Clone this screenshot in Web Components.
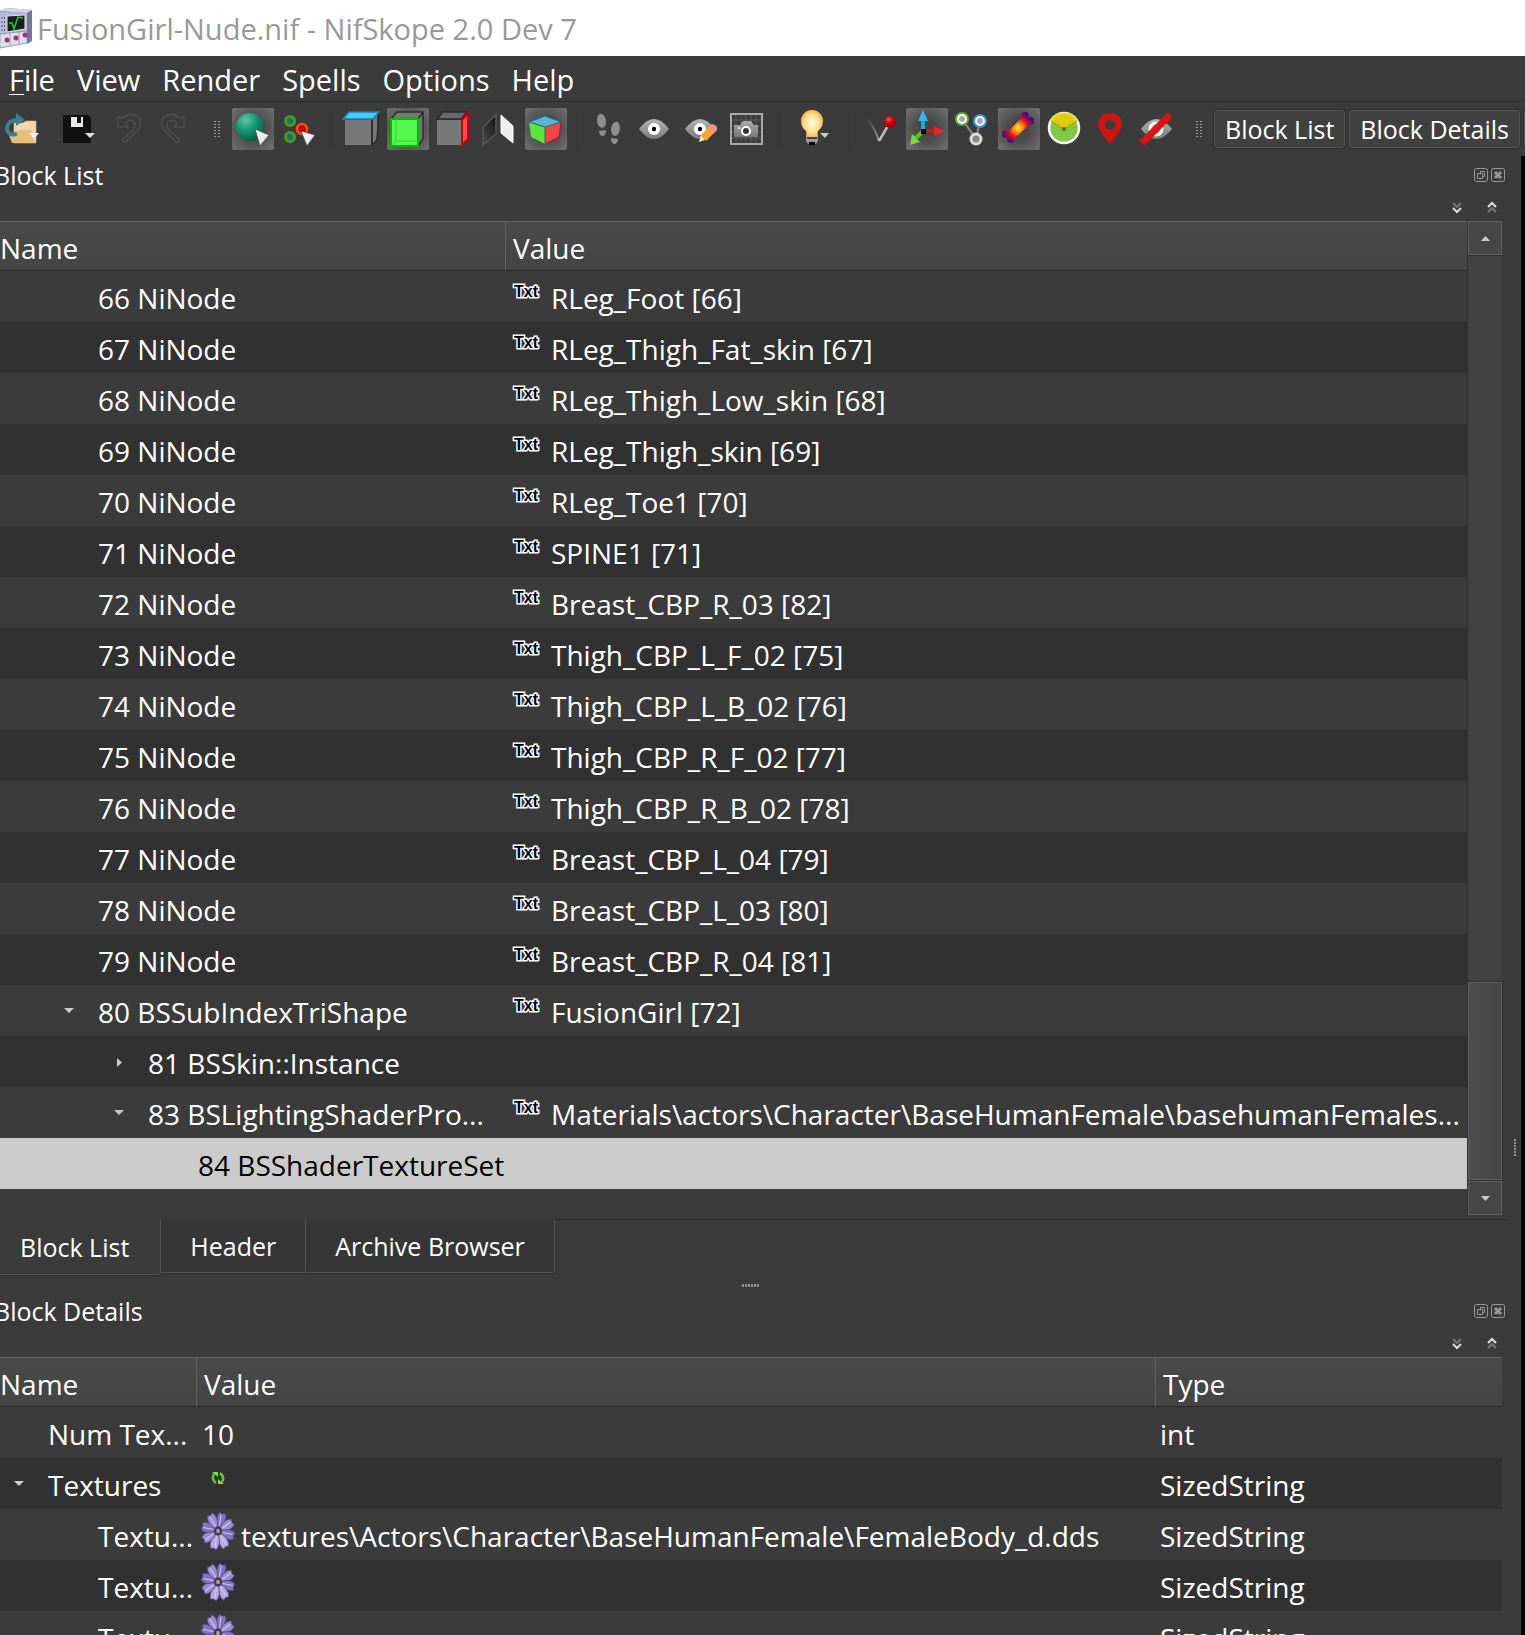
<!DOCTYPE html>
<html lang="en">
<head>
<meta charset="utf-8">
<title>FusionGirl-Nude.nif - NifSkope 2.0 Dev 7</title>
<style>
html, body { margin: 0; height: 100%; }
body {
  background: #000;
  color: #fff;
  overflow: hidden;
  font-family: "Open Sans", "Noto Sans", sans-serif;
  font-size: 28px;
}
</style>
</head>
<body>
<nif-window></nif-window>

<script>
const DEFS = `<defs>
<linearGradient id="gLens" x1="0" y1="0" x2="0" y2="1"><stop offset="0" stop-color="#b4b4b4"/><stop offset="1" stop-color="#7c7c7c"/></linearGradient>
<linearGradient id="gCur" x1="0" y1="0" x2="1" y2="1"><stop offset="0" stop-color="#fff"/><stop offset="1" stop-color="#d8d8d8"/></linearGradient>
<radialGradient id="gSphere" cx=".35" cy=".25" r=".8"><stop offset="0" stop-color="#5ccaa6"/><stop offset=".5" stop-color="#159370"/><stop offset="1" stop-color="#045a42"/></radialGradient>
<radialGradient id="gBulb"><stop offset="0" stop-color="#fffbe0"/><stop offset=".6" stop-color="#ffe49a"/><stop offset="1" stop-color="#f2bd5c"/></radialGradient>
<radialGradient id="gBall" cx=".4" cy=".3"><stop offset="0" stop-color="#ff6060"/><stop offset=".5" stop-color="#dd0c0c"/><stop offset="1" stop-color="#a00"/></radialGradient>
<linearGradient id="gBlack" x1="1" y1="0" x2="0" y2="1"><stop offset="0" stop-color="#111"/><stop offset="1" stop-color="#4a4a4a"/></linearGradient>
<linearGradient id="gFade" x1="0" y1="0" x2="1" y2="1"><stop offset="0" stop-color="#333"/><stop offset="1" stop-color="#999"/></linearGradient>
<radialGradient id="gHeat" gradientUnits="userSpaceOnUse" cx="20" cy="20" r="16"><stop offset="0" stop-color="#ffe838"/><stop offset=".3" stop-color="#ff8a10"/><stop offset=".6" stop-color="#e0102c"/><stop offset="1" stop-color="#4a0a78"/></radialGradient>
<linearGradient id="gCam" x1="0" y1="0" x2="0" y2="1"><stop offset="0" stop-color="#aaa"/><stop offset="1" stop-color="#777"/></linearGradient>
</defs>`;

const LENS = '<path d="M5 21Q20 1 35 21Q20 41 5 21Z" fill="url(#gLens)"/><circle cx="20" cy="21" r="6" fill="#fff"/><circle cx="20" cy="21" r="2.2" fill="#000"/>';
const UNDO = '<path d="M10 9v10h10l-3-4q4-4 8-2q4 4 0 9l-10 9q-1 4 3 3l12-12q5-8 0-13q-8-6-15 1z" fill="none" stroke="#505050" stroke-width="1.3" stroke-linejoin="round"/>';

const ICONS = {
  open: '<path d="M14 15h9l3-2h10v22H14z" fill="#f3d6aa" stroke="#dbb880" stroke-width=".6"/><path d="M8 25h8l3-3h12l4 13H12z" fill="#e8be7c"/><path d="M17 26q-10 2-10-6q1-8 11-8" fill="none" stroke="#3c7f8f" stroke-width="4"/><path d="M16 5l9 7-9 6z" fill="#3c7f8f"/><path d="M29 25h10l-5 6z" fill="#eee"/>',
  save: '<path d="M9 7h25l3 3v25H9z" fill="#111"/><path d="M17 9h12v10H17z" fill="#e8e8e8"/><path d="M23 9h4v6h-4z" fill="#111"/><path d="M31 25h10l-5 5z" fill="#ddd"/>',
  undo: UNDO,
  redo: '<g transform="matrix(-1 0 0 1 40 0)">' + UNDO + '</g>',
  sphere: '<circle cx="18" cy="19" r="14" fill="url(#gSphere)"/><path d="M23 21l14 6-9 11z" fill="url(#gCur)" stroke="#444" stroke-width=".7"/>',
  verts: '<g fill="#1c6a72" stroke="#4a9a1c" stroke-width="3"><circle cx="12" cy="13" r="4.5"/><circle cx="12" cy="29" r="4.5"/></g><circle cx="24" cy="21" r="5" fill="#c00000" stroke="#ff5010" stroke-width="2.5"/><path d="M23 23l14 4-8 11z" fill="url(#gCur)" stroke="#444" stroke-width=".7"/>',
  cubeTop: '<path d="M4 12h26v25H4zM32 12l4-5v24l-4 6z" fill="#787878"/><path d="M31 11v26M38 4l-2 28-5 5" stroke="#2b2b2b" fill="none" stroke-width="1.5"/><path d="M2 11L8 4h30l-6 7z" fill="#4cc8f8" stroke="#1585bd" stroke-width="1.5"/>',
  cubeFront: '<path d="M4 11L10 4h26v27l-5 7V11z" fill="#777"/><path d="M4 11L10 4h26v27l-5 7M36 4l-5 7" fill="none" stroke="#2c2c2c" stroke-width="1.5"/><path d="M4 11h27v27H4z" fill="#50f850" stroke="#06b806" stroke-width="2"/><path d="M9 11v22h22M9 33l-4 4" fill="none" stroke="#36d336"/>',
  cubeSide: '<path d="M4 12h24v25H4z" fill="#787878"/><path d="M4 11l6-7h24l-6 7z" fill="#6a6a6a" stroke="#2b2b2b" stroke-width="1.5"/><path d="M29 12l6-7v26l-6 6z" fill="#ff4c4c" stroke="#c40000" stroke-width="2"/>',
  mirror: '<path d="M4 19L17 7v19L4 37z" fill="url(#gBlack)" stroke="#585858" stroke-width="1.5"/><path d="M22 7l12 11v17L22 25z" fill="#eee" stroke="#fff"/>',
  colorCube: '<path d="M4 14l16-6 16 6-16 5z" fill="#5cb4dc"/><path d="M4 14l16 5v17L6 29z" fill="#5ce63c"/><path d="M36 14l-16 5v17l14-7z" fill="#f04848"/><path d="M4 14l16 5 16-5M20 19v17" fill="none" stroke="#2a6b50"/><path d="M4 14l16-6 16 6" fill="none" stroke="#1a7096"/><path d="M36 14l-2 15-14 7" fill="none" stroke="#b01818"/>',
  feet: '<g fill="#8e8e8e"><path d="M9 11q1-6 5-5q4 2 4 8q0 5-4 6q-5-1-5-9zM11 23l7-1q0 6-4 6q-3-1-3-5zM32 19q-1-6-5-5q-4 2-4 8q0 5 4 6q5-1 5-9zM30 31l-7-1q0 6 4 6q3-1 3-5z"/></g>',
  eye: LENS,
  eyeEdit: LENS + '<path d="M19 34l2-7 4 5z" fill="#ffe5b8"/><path d="M21 27L31 17l6 5-11 11z" fill="#f6a52c"/><path d="M29 19l3-3q6 1 5 6l-3 3z" fill="#f09090"/>',
  camera: '<path d="M5 6h31v30H5zM10 6v30M15 6v30M20 6v30M25 6v30M30 6v30M5 12h31M5 18h31M5 24h31M5 30h31" fill="none" stroke="#5c5c5c"/><path d="M5 6h31v30H5z" fill="none" stroke="#a8a8a8" stroke-width="2"/><path d="M8 17h6l3-4h8l3 4h4v12H8z" fill="url(#gCam)"/><circle cx="20" cy="23" r="4" fill="#333" stroke="#fff" stroke-width="2"/><circle cx="13" cy="20" r="1" fill="#fff"/>',
  bulb: '<path d="M17 26h12v7q-2 4-6 4t-6-4z" fill="#999"/><path d="M18 28h10v3H18z" fill="#444"/><path d="M20 34h6v3h-6z" fill="#000"/><path d="M12 13a11 11 0 0 1 22 0q0 6-5 10l-1 6H18l-1-6q-5-4-5-10z" fill="url(#gBulb)"/><path d="M31 25h9l-4 5z" fill="#ccc"/>',
  stick: '<path d="M5 9q8 6 14 24" fill="none" stroke="url(#gFade)" stroke-width="2"/><path d="M19 33L29 16" stroke="#bbb" stroke-width="2.5"/><circle cx="30" cy="14" r="6" fill="url(#gBall)"/>',
  axes: '<path d="M17 23V10" stroke="#28a4e0" stroke-width="4"/><path d="M12 13l5-11 5 11z" fill="#38b4f0"/><path d="M17 23h12" stroke="#d01818" stroke-width="3"/><path d="M28 18l11 5-11 5z" fill="#e82424"/><path d="M17 23l-8 8" stroke="#5cb82c" stroke-width="4"/><path d="M6 26l8 8-10 3z" fill="#7cd840"/><path d="M15 21h5v5h-5z" fill="#000"/>',
  nodes: '<path d="M10 11l14 20 4-18" fill="none" stroke="#888" stroke-width="2"/><circle cx="10" cy="11" r="4.5" fill="#aaa" stroke="#fff" stroke-width="3"/><circle cx="10" cy="11" r="6" fill="none" stroke="#5eb02c" stroke-width="2"/><circle cx="28" cy="13" r="4.5" fill="#aaa" stroke="#fff" stroke-width="3"/><circle cx="28" cy="13" r="6" fill="none" stroke="#3098cc" stroke-width="2"/><circle cx="24" cy="31" r="5" fill="#888" stroke="#ddd" stroke-width="3"/>',
  bone: '<g fill="url(#gHeat)"><circle cx="8" cy="26" r="4"/><circle cx="13" cy="31" r="4"/><circle cx="27" cy="8" r="4"/><circle cx="32" cy="13" r="4"/><path d="M8 26L25 8l8 7-18 17z"/></g>',
  pie: '<circle cx="20" cy="20" r="15" fill="#80c848" stroke="#fff" stroke-width="2.5"/><path d="M20 21L7 13a15 15 0 0 1 26 0z" fill="#dccc10" stroke="#a89c10"/><path d="M7 13a15 15 0 0 1 26 0" fill="none" stroke="#ead81c" stroke-width="2"/><circle cx="20" cy="21" r="2" fill="#57702c"/>',
  pin: '<path d="M20 36Q8 22 8 16a12 11 0 0 1 24 0q0 6-12 20z" fill="#cf1414"/><circle cx="20" cy="17" r="5" fill="#3c3c3c"/>',
  eyeOff: '<path d="M5 21Q20 1 36 21Q20 41 5 21Z" fill="url(#gLens)"/><circle cx="20" cy="21" r="6" fill="#aaa" stroke="#fff" stroke-width="3"/><path d="M6 35L34 7" stroke="#d81414" stroke-width="7"/>'
};

const FLOWER = (() => {
  let petals = '';
  for (let i = 0; i < 8; i++) {
    petals += `<g transform="rotate(${i * 45 + 16} 18 18)"><path d="M18 17Q11 7 15 1l3 1 3-1Q25 7 18 17z" fill="${i > 2 && i < 5 ? '#b5a8e0' : i % 2 ? '#9a8cd0' : '#8272c0'}" stroke="#4a3d80" stroke-width=".6"/><path d="M18 13L17 3" stroke="#d4ccf0" stroke-width="1"/></g>`;
  }
  return `<svg class="flower" width="36" height="40" viewBox="0 0 36 36" preserveAspectRatio="none">${petals}<circle cx="18" cy="18" r="4" fill="#40336c"/><circle cx="18" cy="18" r="2" fill="#b8a050"/></svg>`;
})();
const REFRESH = '<svg class="refresh" width="14" height="14" viewBox="0 0 14 14"><path d="M5 12Q0 8 3 3M9 2q5 4 2 9" fill="none" stroke="#5cc82c" stroke-width="2.5"/><path d="M1 1h6v5zM13 13H7V8z" fill="#7ae040"/></svg>';

function define(name, css, render) {
  customElements.define(name, class extends HTMLElement {
    constructor() {
      super();
      this.attachShadow({ mode: 'open' });
    }
    connectedCallback() {
      const t = document.createElement('template');
      t.innerHTML = `<style>*{box-sizing:border-box}button{font:inherit;color:inherit;background:none;border:0;padding:0;margin:0}${css}</style>${render(this)}`;
      this.shadowRoot.replaceChildren(t.content.cloneNode(true));
    }
  });
}

define('title-bar', `
  :host { display: flex; align-items: center; gap: 5px; height: 56px; background: #fff; color: #999; font-size: 29px; white-space: nowrap; }
  svg { flex: none; }
`, () => `<svg width="32" height="56" viewBox="0 0 32 56">
  <path d="M0 11l6-3 26 2v31L0 48z" fill="#8f8fb4"/><path d="M0 11l6-3 26 2-5 3z" fill="#d5d5ee"/><path d="M0 12l27 1v30L0 48z" fill="#b9b9d8"/><path d="M27 13l5-3v31l-5 3z" fill="#75759a"/>
  <path d="M7 16l18-1v14L7 32z" fill="#102418" stroke="#e0e0f0"/><path d="M9 23h3l2 6 4-12 5 1" fill="none" stroke="#38c048" stroke-width="1.5"/>
  <path d="M2 17v14M4.5 17v14" stroke="#5a5a80" stroke-dasharray="2 2"/><path d="M0 34l27-3v12L0 48zM10 33v12M19 32v12" fill="#dedeec" stroke="#8080a8" stroke-width=".7"/>
  <g fill="#a83068"><circle cx="7" cy="40" r="2.5"/><circle cx="16" cy="38" r="2.5"/><circle cx="25" cy="35" r="2.5"/></g></svg><span><slot></slot></span>`);

define('menu-bar', `
  :host { display: flex; gap: 22px; height: 46px; padding-left: 9px; background: #3b3b3b; border-bottom: 1px solid #2c2c2c; font-size: 29px; }
  button { display: block; line-height: 48px; }
  u { text-decoration-thickness: 1px; text-underline-offset: 3px; }
`, () => ['<u>F</u>ile', 'View', 'Render', 'Spells', 'Options', 'Help'].map(m => `<button>${m}</button>`).join(''));

define('tool-button', `
  :host { display: block; flex: none; }
  button { display: block; height: 42px; border-radius: 2px; }
  :host([active]) button { background: radial-gradient(circle, #424242 0, #4c4c4c 40%, #737373 100%); }
  svg { display: block; }
`, el => {
  const w = el.hasAttribute('menu') ? 50 : 42;
  return `<button aria-label="${el.getAttribute('icon')}"><svg width="${w}" height="42" viewBox="0 0 ${w} 42">${DEFS}${ICONS[el.getAttribute('icon')]}</svg></button>`;
});

define('dot-grip', `
  :host { display: flex; flex: none; justify-content: center; align-items: center; box-sizing: border-box; }
  i { width: 6px; height: 17px; background: repeating-linear-gradient(#3b3b3b00 0 1px, #3b3b3b 1px 3px), repeating-linear-gradient(90deg, #a0a0a0 0 2px, #3b3b3b 2px 4px); }
  :host([kind=row]) i { width: 18px; height: 3px; background: repeating-linear-gradient(90deg, #909090 0 2px, #3b3b3b 2px 3px); }
  :host([kind=column]) i { width: 2px; height: 18px; background: repeating-linear-gradient(#909090 0 2px, #3b3b3b 2px 3px); }
`, () => '<i></i>');

define('tool-bar', `
  :host { display: flex; align-items: center; gap: 4px; height: 54px; background: #3b3b3b; overflow: hidden; }
  hr { flex: none; width: 1px; height: 36px; margin: 0 6px; border: 0; background: #353535; }
  dot-grip { width: 28px; height: 42px; padding-left: 6px; }
  .text { flex: none; height: 38px; padding: 0 10px; border: 1px solid #555; border-radius: 3px; outline: 1px solid #2e2e2e; background: #404040; font-size: 25px; line-height: 36px; min-width: 130px; }
`, () => {
  const b = (i, a = '') => `<tool-button icon="${i}" ${a}></tool-button>`;
  return b('open', 'menu') + b('save', 'menu') + b('undo') + b('redo') + '<dot-grip></dot-grip>' +
    b('sphere', 'active') + b('verts') + '<hr>' + b('cubeTop') + b('cubeFront', 'active') + b('cubeSide') + b('mirror') + b('colorCube', 'active') + '<hr>' +
    b('feet') + b('eye') + b('eyeEdit') + b('camera') + '<hr>' + b('bulb', 'menu') + '<hr>' +
    b('stick') + b('axes', 'active') + b('nodes') + b('bone', 'active') + b('pie') + b('pin') + b('eyeOff') + '<dot-grip></dot-grip>' +
    '<button class="text">Block List</button><button class="text">Block Details</button><button class="text" aria-label="More"></button>';
});

define('dock-panel', `
  :host { display: block; }
  header { display: flex; align-items: center; height: 38px; padding-right: 16px; gap: 3px; }
  h2 { flex: 1; margin: 0 0 0 -6px; font-size: 25px; font-weight: 400; line-height: 40px; white-space: nowrap; }
  header button { width: 14px; height: 14px; margin-bottom: 1px; }
  nav { display: flex; justify-content: flex-end; align-items: center; gap: 25px; height: 27px; padding-right: 24px; }
  nav button { width: 10px; height: 13px; }
  svg { display: block; }
`, el => `<header><h2>${el.getAttribute('heading')}</h2>
  <button aria-label="Float"><svg width="14" height="14" viewBox="0 0 14 14" fill="none" stroke="#999"><rect x=".5" y=".5" width="13" height="13" rx="2"/><path d="M3.5 5.5h5v5h-5zM6.5 5.5v-2h4v5h-2"/></svg></button>
  <button aria-label="Close"><svg width="14" height="14" viewBox="0 0 14 14" fill="none" stroke="#999"><rect x=".5" y=".5" width="13" height="13" rx="2"/><path d="M4 4l6 6M10 4l-6 6" stroke-width="3"/></svg></button></header>
  <nav><button aria-label="Expand"><svg width="10" height="13" viewBox="0 0 10 13" fill="none" stroke-width="2"><path d="M1 2l4 4 4-4" stroke="#777"/><path d="M1 7l4 4 4-4" stroke="#ddd"/></svg></button>
  <button aria-label="Collapse"><svg width="10" height="13" viewBox="0 0 10 13" fill="none" stroke-width="2"><path d="M1 6l4-4 4 4" stroke="#ddd"/><path d="M1 11l4-4 4 4" stroke="#777"/></svg></button></nav><slot></slot>`);

const TABLE_CSS = `
  table { width: 100%; border-collapse: separate; border-spacing: 0; table-layout: fixed; }
  th { height: 50px; padding: 5px 0 0 7px; text-align: left; font-weight: 400; line-height: 43px; background: linear-gradient(#4a4a4a, #444); border-top: 1px solid #666; border-bottom: 1px solid #2a2a2a; border-left: 1px solid #606060; }
  th:first-child { padding-left: 0; border-left: 0; }
  td { height: 51px; padding: 4px 0 0 7px; line-height: 47px; white-space: nowrap; overflow: hidden; }
  tbody tr:nth-child(even) { background: #313131; }
  tbody tr.selected { background: #cbcbcb; color: #000; }
  .cell { display: flex; height: 47px; }
  .twist { flex: none; width: 34px; margin-left: -34px; padding-top: 18px; }
  .twist svg { display: block; }
`;
const twist = open => open == null ? '' : `<span class="twist"><svg width="10" height="9" viewBox="0 0 10 9"><path d="${open ? 'M0 1h10L5 6z' : 'M3 0v9l5-4.5z'}" fill="#ccc"/></svg></span>`;

define('block-tree', `
  :host { display: flex; padding-right: 19px; }
  .view { flex: 1; min-width: 0; padding-bottom: 26px; }
  ${TABLE_CSS}
  .txt { flex: none; width: 37px; height: 14px; margin: 9px 0 0 2px; font: bold 16px/16px "Liberation Sans", sans-serif; color: #000; -webkit-text-stroke: 3px #fff; paint-order: stroke fill; }
  aside { display: flex; flex-direction: column; width: 35px; border-left: 1px solid #303030; background: #424242; }
  aside button { display: grid; place-items: center; height: 34px; border: 1px solid #606060; background: #464646; }
  .track { flex: 1; display: flex; align-items: flex-end; border-top: 1px solid #303030; border-bottom: 1px solid #303030; }
  .thumb { width: 100%; height: 198px; border: 1px solid #606060; outline: 1px solid #303030; background: linear-gradient(90deg, #4e4e4e, #454545); }
`, () => {
  const nodes = ['RLeg_Foot [66]', 'RLeg_Thigh_Fat_skin [67]', 'RLeg_Thigh_Low_skin [68]', 'RLeg_Thigh_skin [69]', 'RLeg_Toe1 [70]', 'SPINE1 [71]', 'Breast_CBP_R_03 [82]', 'Thigh_CBP_L_F_02 [75]', 'Thigh_CBP_L_B_02 [76]', 'Thigh_CBP_R_F_02 [77]', 'Thigh_CBP_R_B_02 [78]', 'Breast_CBP_L_04 [79]', 'Breast_CBP_L_03 [80]', 'Breast_CBP_R_04 [81]'];
  const rows = nodes.map((v, i) => ({ name: `${66 + i} NiNode`, value: v, level: 0 }));
  rows.push({ name: '80 BSSubIndexTriShape', value: 'FusionGirl [72]', level: 0, open: true },
    { name: '81 BSSkin::Instance', level: 1, open: false },
    { name: '83 BSLightingShaderPro...', value: 'Materials\\actors\\Character\\BaseHumanFemale\\basehumanFemales...', level: 1, open: true },
    { name: '84 BSShaderTextureSet', level: 2, selected: true });
  return `<div class="view"><table><colgroup><col style="width:505px"><col></colgroup><thead><tr><th>Name</th><th>Value</th></tr></thead><tbody>` +
    rows.map(r => `<tr${r.selected ? ' class="selected"' : ''}><td style="padding-left:${98 + r.level * 50}px"><div class="cell">${twist(r.open)}<span>${r.name}</span></div></td><td>${r.value ? `<div class="cell"><span class="txt">Txt</span><span>${r.value}</span></div>` : ''}</td></tr>`).join('') +
    `</tbody></table></div><aside><button aria-label="Scroll up"><svg width="9" height="5"><path d="M0 5h9L4.5 0z" fill="#ccc"/></svg></button><div class="track"><div class="thumb"></div></div><button aria-label="Scroll down"><svg width="9" height="5"><path d="M0 0h9L4.5 5z" fill="#ccc"/></svg></button></aside>`;
});

define('tab-strip', `
  :host { display: flex; align-items: flex-start; height: 56px; margin: 4px 14px 0 0; font-size: 25px; }
  button { height: 54px; padding: 0 29px; line-height: 54px; background: #363636; border: solid #525252; border-width: 0 1px 1px 0; border-radius: 0 0 2px 0; box-shadow: 0 1px #2e2e2e; }
  button[aria-selected=true] { height: 56px; padding: 0 31px 0 20px; line-height: 56px; background: #3b3b3b; }
  i { flex: 1; border-top: 1px solid #2c2c2c; }
`, () => '<button role="tab" aria-selected="true">Block List</button><button role="tab">Header</button><button role="tab">Archive Browser</button><i></i>');

define('details-tree', `
  :host { display: block; padding-right: 19px; }
  ${TABLE_CSS}
  td { padding-left: 6px; }
  td:last-child { padding-left: 5px; }
  .flower { flex: none; margin: -2px 5px 0 -2px; }
  .refresh { margin: 9px 0 0 9px; }
`, () => {
  const rows = [['Num Tex...', '10', 'int', 48], ['Textures', REFRESH, 'SizedString', 48, true],
    ['Textu...', FLOWER + '<span>textures\\Actors\\Character\\BaseHumanFemale\\FemaleBody_d.dds</span>', 'SizedString', 98],
    ['Textu...', FLOWER, 'SizedString', 98], ['Textu...', FLOWER, 'SizedString', 98]];
  return `<table><colgroup><col style="width:196px"><col><col style="width:347px"></colgroup><thead><tr><th>Name</th><th>Value</th><th>Type</th></tr></thead><tbody>` +
    rows.map(r => `<tr><td style="padding-left:${r[3]}px"><div class="cell">${twist(r[4])}<span>${r[0]}</span></div></td><td><div class="cell">${r[1]}</div></td><td>${r[2]}</td></tr>`).join('') + '</tbody></table>';
});

define('nif-window', `
  :host { display: flex; flex-direction: column; height: 100vh; overflow: hidden; }
  title-bar, menu-bar, tool-bar { flex: none; }
  main { flex: 1; min-height: 0; display: flex; margin-right: 4px; background: #3b3b3b; }
  .docks { flex: 1; min-width: 0; margin-right: -14px; }
  .split { height: 17px; margin-right: 20px; padding-top: 4px; }
  .side { width: 14px; padding-top: 504px; padding-left: 2px; }
`, () => `<title-bar>FusionGirl-Nude.nif - NifSkope 2.0 Dev 7</title-bar><menu-bar></menu-bar><tool-bar></tool-bar>
  <main><div class="docks"><dock-panel heading="Block List"><block-tree></block-tree><tab-strip></tab-strip></dock-panel>
  <dot-grip class="split" kind="row"></dot-grip>
  <dock-panel heading="Block Details"><details-tree></details-tree></dock-panel></div><dot-grip class="side" kind="column"></dot-grip></main>`);
</script>
</body>
</html>
